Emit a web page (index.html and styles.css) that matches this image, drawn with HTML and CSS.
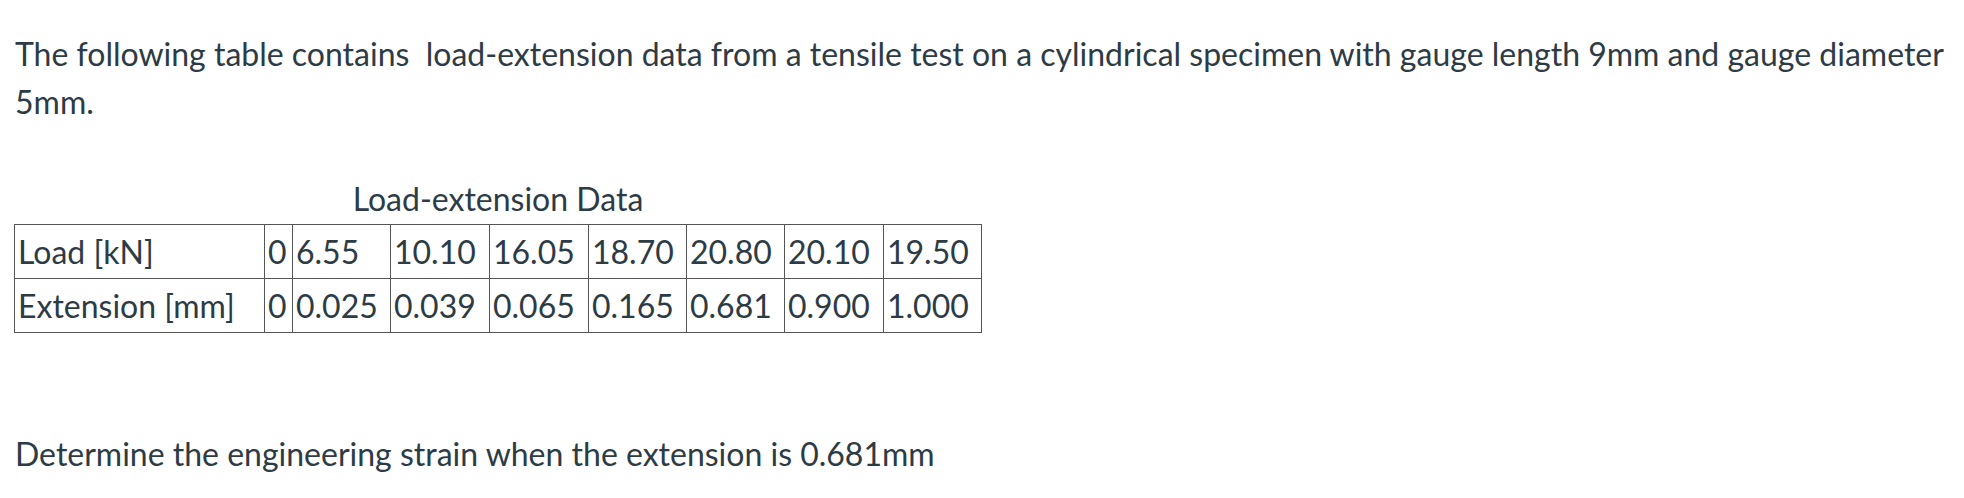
FILE: index.html
```html
<!DOCTYPE html>
<html>
<head>
<meta charset="utf-8">
<link rel="stylesheet" href="styles.css">
</head>
<body>
<div class="content">
  <p class="intro">The following table contains&nbsp; load-extension data from a tensile test on a cylindrical specimen with gauge length 9mm and gauge diameter 5mm.</p>
  <table class="data">
    <caption>Load-extension Data</caption>
    <colgroup>
      <col class="c-label">
      <col class="c-zero">
      <col class="c-a">
      <col class="c-b">
      <col class="c-b">
      <col class="c-a">
      <col class="c-a">
      <col class="c-b">
      <col class="c-a">
    </colgroup>
    <tr><td>Load [kN]</td><td>0</td><td>6.55</td><td>10.10</td><td>16.05</td><td>18.70</td><td>20.80</td><td>20.10</td><td>19.50</td></tr>
    <tr><td>Extension [mm]</td><td>0</td><td>0.025</td><td>0.039</td><td>0.065</td><td>0.165</td><td>0.681</td><td>0.900</td><td>1.000</td></tr>
  </table>
  <p class="question">Determine the engineering strain when the extension is 0.681mm</p>
</div>
</body>
</html>
```
FILE: styles.css
```css
html, body {
  margin: 0;
  padding: 0;
  background: #ffffff;
}
body {
  font-family: Lato, "Open Sans", sans-serif;
  color: #2d3b45;
  font-size: 32px;
}
.content {
  padding: 30px 0 0 14px;
}
.intro {
  margin: 0;
  padding-left: 1px;
  line-height: 48px;
}
.data {
  margin-top: 55px;
  border-collapse: collapse;
  table-layout: fixed;
  color: #2d3b45;
}
.data caption {
  line-height: 36px;
  padding-bottom: 7px;
}
.data td {
  border: 1px solid #555555;
  height: 54px;
  padding: 0 3px;
  white-space: nowrap;
  box-sizing: border-box;
  line-height: 40px;
}
.c-label { width: 250px; }
.c-zero { width: 28px; }
.c-a { width: 98px; }
.c-b { width: 99px; }
.question {
  margin: 0;
  margin-top: 97px;
  padding-left: 1px;
  line-height: 48px;
}
```
